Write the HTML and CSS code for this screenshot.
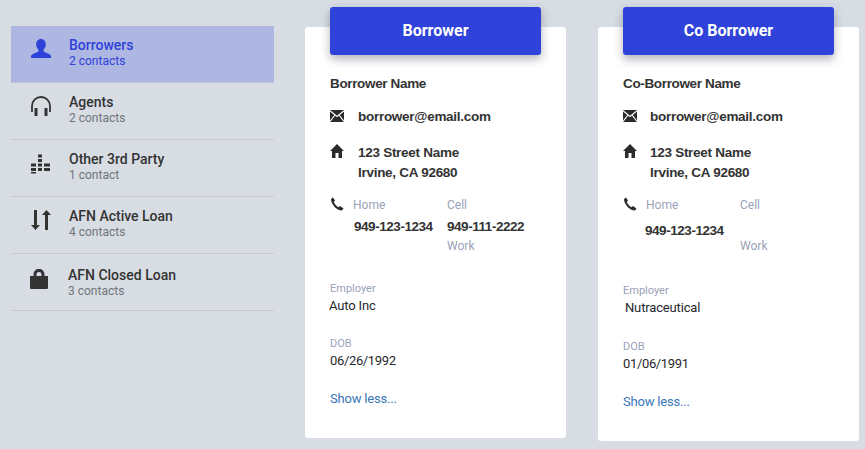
FILE: index.html
```html
<!DOCTYPE html>
<html lang="en">
<head>
<meta charset="utf-8">
<title>Contacts</title>
<link rel="stylesheet" href="styles.css">
</head>
<body>
<div class="page">
  <nav class="side">
    <div class="item active">
      <svg class="ico" viewBox="0 0 22 22"><path d="M11 1c3 0 4.800 2.400 4.800 5.400 0 2.300-1 4.200-2.300 5.400v1.800c1.500.9 6.200 2 7.500 4.400v2H1v-2c1.300-2.400 6-3.500 7.500-4.400v-1.800C7.200 10.600 6.200 8.700 6.200 6.400 6.200 3.400 8 1 11 1z"/></svg>
      <div class="txt"><div class="ttl">Borrowers</div><div class="sub">2 contacts</div></div>
    </div>
    <div class="item">
      <svg class="ico" viewBox="0 0 22 22"><path d="M2 17v-6a9 9 0 0 1 18 0v6" fill="none" stroke="currentColor" stroke-width="1.800"/><rect x="4.500" y="13" width="3" height="8"/><rect x="14.500" y="13" width="3" height="8"/></svg>
      <div class="txt"><div class="ttl">Agents</div><div class="sub">2 contacts</div></div>
    </div>
    <div class="item">
      <svg class="ico" viewBox="0 0 22 22"><path d="M8 3h4v3H8zM8 7.500h4v3H8zM1 12h5v3H1zM8 12h4v3H8zM14 12h6v3h-6zM1 16.500h5v3H1zM8 16.500h4v3H8zM14 16.500h6v3h-6zM1 20.500h5V22H1z" transform="translate(0 -.5)"/></svg>
      <div class="txt"><div class="ttl">Other 3rd Party</div><div class="sub">1 contact</div></div>
    </div>
    <div class="item">
      <svg class="ico" viewBox="0 0 22 22"><path d="M4 1h3v15h3l-4.500 5L1 16h3zM15 21h3V6h3l-4.500-5L12 6h3z"/></svg>
      <div class="txt"><div class="ttl">AFN Active Loan</div><div class="sub">4 contacts</div></div>
    </div>
    <div class="item last">
      <svg class="ico lock" viewBox="0 0 18 20"><path fill-rule="evenodd" d="M3.500 7V5.500C3.500 2 6 0 9 0s5.500 2 5.500 5.500V7H18v12a1 1 0 0 1-1 1H1a1 1 0 0 1-1-1V7zM6.500 7h5V5.500C11.500 3.800 10.500 3 9 3S6.500 3.800 6.500 5.500z"/></svg>
      <div class="txt"><div class="ttl">AFN Closed Loan</div><div class="sub">3 contacts</div></div>
    </div>
  </nav>

  <section class="card">
    <div class="head">Borrower</div>
    <div class="name">Borrower Name</div>
    <div class="row mail">
      <svg class="mini" viewBox="0 0 14 12"><path d="M0 0h14v12H0z"/><path d="M0 .8 7 6.500l7-5.700M0 11.500 5 5M14 11.500 9 5" fill="none" stroke="#fff" stroke-width="1.200"/></svg>
      <span>borrower@email.com</span>
    </div>
    <div class="row addr">
      <svg class="mini home" viewBox="0 0 14 14"><path d="M7 0l7 7h-2v7H8.500V9h-3v5H2V7H0z"/></svg>
      <span>123 Street Name<br>Irvine, CA 92680</span>
    </div>
    <div class="phones">
      <svg class="tel" viewBox="0 0 14 14"><path d="M3 .5 5 3.500 3.800 5c.8 2 2.700 4.200 4.700 5.200L10 9l3.500 2.500-1.500 2C6.500 13.500 1 7 1 2z"/></svg>
      <div class="pcol">
        <div class="plabel">Home</div>
        <div class="pnum">949-123-1234</div>
      </div>
      <div class="pcol">
        <div class="plabel">Cell</div>
        <div class="pnum flush">949-111-2222</div>
        <div class="plabel work">Work</div>
      </div>
    </div>
    <div class="lbl emp">Employer</div>
    <div class="val shift">Auto Inc</div>
    <div class="lbl dob">DOB</div>
    <div class="val date">06/26/1992</div>
    <a class="more">Show less...</a>
  </section>

  <section class="card co">
    <div class="head">Co Borrower</div>
    <div class="name">Co-Borrower Name</div>
    <div class="row mail">
      <svg class="mini" viewBox="0 0 14 12"><path d="M0 0h14v12H0z"/><path d="M0 .8 7 6.500l7-5.700M0 11.500 5 5M14 11.500 9 5" fill="none" stroke="#fff" stroke-width="1.200"/></svg>
      <span>borrower@email.com</span>
    </div>
    <div class="row addr">
      <svg class="mini home" viewBox="0 0 14 14"><path d="M7 0l7 7h-2v7H8.500V9h-3v5H2V7H0z"/></svg>
      <span>123 Street Name<br>Irvine, CA 92680</span>
    </div>
    <div class="phones">
      <svg class="tel" viewBox="0 0 14 14"><path d="M3 .5 5 3.500 3.800 5c.8 2 2.700 4.200 4.700 5.200L10 9l3.500 2.500-1.500 2C6.500 13.500 1 7 1 2z"/></svg>
      <div class="pcol">
        <div class="plabel">Home</div>
        <div class="pnum low">949-123-1234</div>
      </div>
      <div class="pcol">
        <div class="plabel">Cell</div>
        <div class="pnum flush">&nbsp;</div>
        <div class="plabel work">Work</div>
      </div>
    </div>
    <div class="lbl emp">Employer</div>
    <div class="val right">Nutraceutical</div>
    <div class="lbl dob">DOB</div>
    <div class="val date">01/06/1991</div>
    <a class="more">Show less...</a>
  </section>
</div>
</body>
</html>
```
FILE: styles.css
```css
* { box-sizing: border-box; }
html, body { margin: 0; height: 100%; }
body { background: #d8dde4; font-family: Roboto, sans-serif; color: #333; overflow: hidden; }
.page { display: flex; align-items: flex-start; padding: 7px 0 0 11px; }

.side { width: 263px; flex: none; margin-top: 19px; margin-right: 31px; }
.item { height: 57px; display: flex; align-items: center; padding: 0 0 3px 19px; border-bottom: 1px solid #c8cbcd; color: #333; }
.item.active { background: #aeb6e2; color: #2e42da; border-bottom-color: #c0c4d4; }
.item.last { padding-left: 19px; padding-top: 2px; padding-bottom: 0; }
.ico { width: 22px; height: 22px; fill: currentColor; flex: none; margin-right: 17px; margin-bottom: 7px; }
.ico.lock { width: 18px; height: 20px; margin-right: 20px; margin-bottom: 9px; }
.ttl { font-size: 14px; font-weight: 500; line-height: 16px; margin-top: -1px; }
.sub { font-size: 12px; line-height: 14px; margin-top: 1px; color: #717579; }
.active .sub { color: #2e42da; }

.card { width: 261px; height: 411px; margin-top: 20px; margin-right: 32px; padding: 0 25px; background: #fff; border-radius: 3px; flex: none; }
.card.co { height: 414px; }
.head { height: 48px; margin-top: -20px; padding-bottom: 2px; background: #2f43da; color: #fff; border-radius: 3px; display: flex; align-items: center; justify-content: center; font-size: 16px; font-weight: 700; box-shadow: 0 4px 10px rgba(60, 60, 80, .4); }
.name { font-family: "Liberation Sans", Arial, sans-serif; font-size: 13.5px; font-weight: 700; letter-spacing: -.35px; line-height: 18px; margin-top: 20px; }
.row { display: flex; font-family: "Liberation Sans", Arial, sans-serif; font-size: 13.5px; font-weight: 700; letter-spacing: -.28px; }
.mini { width: 14px; height: 12px; fill: #2b2b2b; flex: none; margin-top: 2px; margin-right: 14px; }
.mini.home { height: 14px; margin-top: 1px; }
.mail { margin-top: 15px; line-height: 18px; }
.co .mini { margin-right: 13px; }
.addr { margin-top: 17px; line-height: 20px; }
.phones { display: flex; margin-top: 14px; }
.tel { width: 14px; height: 14px; fill: #2b2b2b; flex: none; margin-right: 9px; }
.pcol { width: 94px; flex: none; }
.plabel { font-size: 12px; line-height: 16px; color: #9aa2b8; }
.pnum { font-family: "Liberation Sans", Arial, sans-serif; font-size: 13.5px; font-weight: 700; letter-spacing: -.45px; line-height: 18px; margin-top: 5px; margin-left: 1px; }
.pnum.flush { margin-left: 0; }
.pnum.low { margin-top: 9px; margin-left: -1px; }
.work { margin-top: 2px; }
.lbl { font-size: 11px; line-height: 13px; color: #9aa2b8; }
.emp { margin-top: 28px; }
.co .emp { margin-top: 30px; }
.dob { margin-top: 23px; }
.co .dob { margin-top: 24px; }
.val { font-size: 13px; letter-spacing: -.15px; line-height: 16px; margin-top: 3px; color: #26282c; }
.val.date { letter-spacing: -.35px; }
.val.shift { margin-left: -1px; }
.val.right { margin-left: 2px; }
.more { display: block; font-size: 13px; letter-spacing: -.2px; line-height: 16px; margin-top: 22px; color: #3b76b8; }
```
